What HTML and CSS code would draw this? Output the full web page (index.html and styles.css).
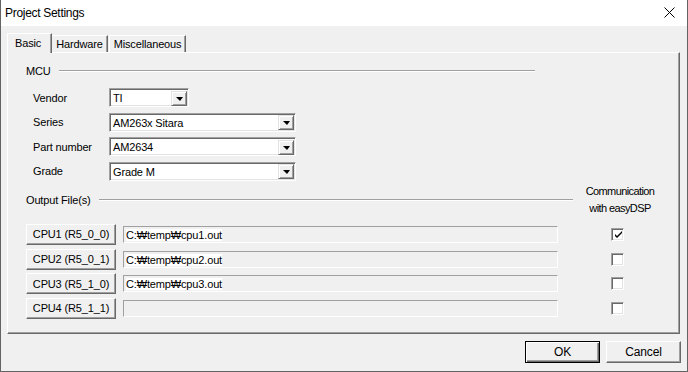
FILE: index.html
```html
<!DOCTYPE html>
<html lang="en">
<head>
  <meta charset="UTF-8">
  <title>Project Settings</title>
  <link rel="stylesheet" href="styles.css">
</head>
<body>
  <div class="window">
    <div class="titlebar">
      <span class="title">Project Settings</span>
      <svg class="close" width="11" height="11" viewBox="0 0 11 11">
        <path d="M0.5 0.5 L10.5 10.5 M10.5 0.5 L0.5 10.5" stroke="#000" stroke-width="1"/>
      </svg>
    </div>

    <div class="tabs">
      <div class="tab active">Basic</div>
      <div class="tab">Hardware</div>
      <div class="tab">Miscellaneous</div>
    </div>

    <div class="panel">
      <div class="group-head mcu-head">
        <span>MCU</span>
        <div class="etched"></div>
      </div>

      <div class="mcu-form">
        <label>Vendor</label>
        <div class="combo short">
          <span class="combo-text">TI</span>
          <span class="drop"><i></i></span>
        </div>
        <label>Series</label>
        <div class="combo">
          <span class="combo-text">AM263x Sitara</span>
          <span class="drop"><i></i></span>
        </div>
        <label>Part number</label>
        <div class="combo">
          <span class="combo-text">AM2634</span>
          <span class="drop"><i></i></span>
        </div>
        <label>Grade</label>
        <div class="combo">
          <span class="combo-text">Grade M</span>
          <span class="drop"><i></i></span>
        </div>
      </div>

      <div class="output">
        <div class="output-head">
          <div class="group-head out-head">
            <span>Output File(s)</span>
            <div class="etched"></div>
          </div>
          <div class="col-title">Communication<br>with easyDSP</div>
        </div>

        <div class="cpu-rows">
          <button class="btn cpu">CPU1 (R5_0_0)</button>
          <div class="field"><span>C:₩temp₩cpu1.out</span></div>
          <div class="check checked">
            <svg width="9" height="9" viewBox="0 0 9 9"><path d="M1 4 L3 6 L8 1 L8 3 L3 8 L1 6 Z" fill="#000"/></svg>
          </div>

          <button class="btn cpu">CPU2 (R5_0_1)</button>
          <div class="field"><span>C:₩temp₩cpu2.out</span></div>
          <div class="check"></div>

          <button class="btn cpu">CPU3 (R5_1_0)</button>
          <div class="field"><span>C:₩temp₩cpu3.out</span></div>
          <div class="check"></div>

          <button class="btn cpu">CPU4 (R5_1_1)</button>
          <div class="field"></div>
          <div class="check"></div>
        </div>
      </div>
    </div>

    <div class="footer">
      <button class="btn default">OK</button>
      <button class="btn">Cancel</button>
    </div>
  </div>
</body>
</html>
```

FILE: styles.css
```css
body {
  margin: 0;
  padding: 0;
  background: #f0f0f0;
  font-family: "Liberation Sans", Arial, "Noto Sans CJK KR", sans-serif;
  font-size: 11px;
  letter-spacing: -0.15px;
  color: #000;
}

.window {
  width: 688px;
  height: 372px;
  box-sizing: border-box;
  border: 1px solid #646464;
  border-top: none;
  background: #f0f0f0;
}

.titlebar {
  height: 26px;
  background: #fff;
  display: flex;
  align-items: center;
  justify-content: space-between;
  padding: 0 12px 0 4px;
}

.title {
  font-size: 12px;
  letter-spacing: -0.3px;
}

.close {
  margin-top: -1px;
}

/* tab strip */
.tabs {
  display: flex;
  align-items: flex-end;
  height: 19px;
  margin: 7px 0 0 6px;
}

.tab {
  height: 16px;
  line-height: 16px;
  padding: 0 4px;
  border-top: 1px solid #fff;
  border-left: 1px solid #fff;
  border-right: 1px solid #696969;
  box-shadow: inset -1px 0 0 #a0a0a0;
  margin-right: 1px;
}

.tab.active {
  position: relative;
  z-index: 1;
  height: 19px;
  line-height: 19px;
  padding: 0 10px 0 7px;
  margin-bottom: -1px;
  margin-right: 0;
  background: #f0f0f0;
}

.tab.active + .tab {
  border-left: none;
}

/* tab page */
.panel {
  height: 282px;
  margin: 0 7px 0 6px;
  box-sizing: border-box;
  border-top: 1px solid #fff;
  border-left: 1px solid #fff;
  border-right: 1px solid #696969;
  border-bottom: 1px solid #696969;
  box-shadow: inset -1px -1px 0 #a0a0a0;
  padding-top: 11px;
}

.group-head {
  display: flex;
  align-items: center;
  height: 13px;
}

.group-head span {
  white-space: nowrap;
  margin-right: 8px;
}

.etched {
  flex: 1;
  height: 0;
  border-top: 1px solid #a0a0a0;
  border-bottom: 1px solid #fff;
}

.mcu-head {
  margin-left: 18px;
  width: 509px;
}

.mcu-form {
  display: grid;
  grid-template-columns: 76px auto;
  grid-template-rows: repeat(4, 19px);
  row-gap: 5.67px;
  justify-items: start;
  align-items: center;
  margin: 11px 0 0 25px;
}

.combo {
  width: 187px;
  height: 19px;
  box-sizing: border-box;
  display: flex;
  align-items: center;
  background: #fff;
  border-top: 1px solid #a0a0a0;
  border-left: 1px solid #a0a0a0;
  border-right: 1px solid #fff;
  border-bottom: 1px solid #fff;
  box-shadow: inset 1px 1px 0 #696969, inset -1px -1px 0 #e3e3e3;
  padding: 2px 1px 1px 2px;
}

.combo.short {
  width: 80px;
}

.combo-text {
  flex: 1;
  padding-left: 1px;
}

.drop {
  width: 16px;
  height: 15px;
  box-sizing: border-box;
  background: #f0f0f0;
  border-top: 1px solid #e3e3e3;
  border-left: 1px solid #e3e3e3;
  border-right: 1px solid #696969;
  border-bottom: 1px solid #696969;
  box-shadow: inset 1px 1px 0 #fff, inset -1px -1px 0 #a0a0a0;
  display: flex;
  align-items: center;
  justify-content: center;
}

.drop i {
  width: 0;
  height: 0;
  border-left: 4px solid transparent;
  border-right: 3px solid transparent;
  border-top: 4px solid #000;
  margin-top: 1px;
}

/* output files */
.output {
  margin: 2px 0 0 18px;
}

.output-head {
  display: flex;
  align-items: center;
  height: 34px;
}

.out-head {
  width: 547px;
}

.col-title {
  width: 94px;
  text-align: center;
  line-height: 17px;
  letter-spacing: -0.6px;
}

.cpu-rows {
  display: grid;
  grid-template-columns: 90px 435px 13px;
  grid-template-rows: repeat(4, 21px);
  row-gap: 3.67px;
  column-gap: 7px;
  align-items: center;
  margin-top: 7px;
}

.btn {
  font-family: inherit;
  font-size: 11px;
  letter-spacing: -0.15px;
  color: #000;
  background: #f0f0f0;
  box-sizing: border-box;
  border-top: 1px solid #fff;
  border-left: 1px solid #fff;
  border-right: 1px solid #696969;
  border-bottom: 1px solid #696969;
  box-shadow: inset -1px -1px 0 #a0a0a0;
  padding: 0;
}

.btn.cpu {
  width: 90px;
  height: 21px;
}

.field {
  height: 17px;
  box-sizing: border-box;
  background: #f0f0f0;
  border-top: 1px solid #a0a0a0;
  border-left: 1px solid #a0a0a0;
  border-right: 1px solid #fff;
  border-bottom: 1px solid #fff;
  padding: 1px 0 0 2px;
  line-height: 14px;
}

.field span {
  background: #fff;
}

.check {
  width: 13px;
  height: 13px;
  box-sizing: border-box;
  margin-left: 46px;
  background: #fff;
  border-top: 1px solid #a0a0a0;
  border-left: 1px solid #a0a0a0;
  border-right: 1px solid #fff;
  border-bottom: 1px solid #fff;
  box-shadow: inset 1px 1px 0 #696969, inset -1px -1px 0 #e3e3e3;
  display: flex;
  align-items: center;
  justify-content: center;
}

.check svg {
  margin: 1px 0 0 1px;
}

/* dialog buttons */
.footer {
  display: flex;
  justify-content: flex-end;
  gap: 6px;
  margin: 7px 6px 0 0;
}

.footer .btn {
  width: 75px;
  height: 22px;
  font-size: 12px;
}

.btn.default {
  border: 1px solid #000;
  box-shadow: inset 1px 1px 0 #fff, inset -1px -1px 0 #696969, inset -2px -2px 0 #a0a0a0;
}
```
